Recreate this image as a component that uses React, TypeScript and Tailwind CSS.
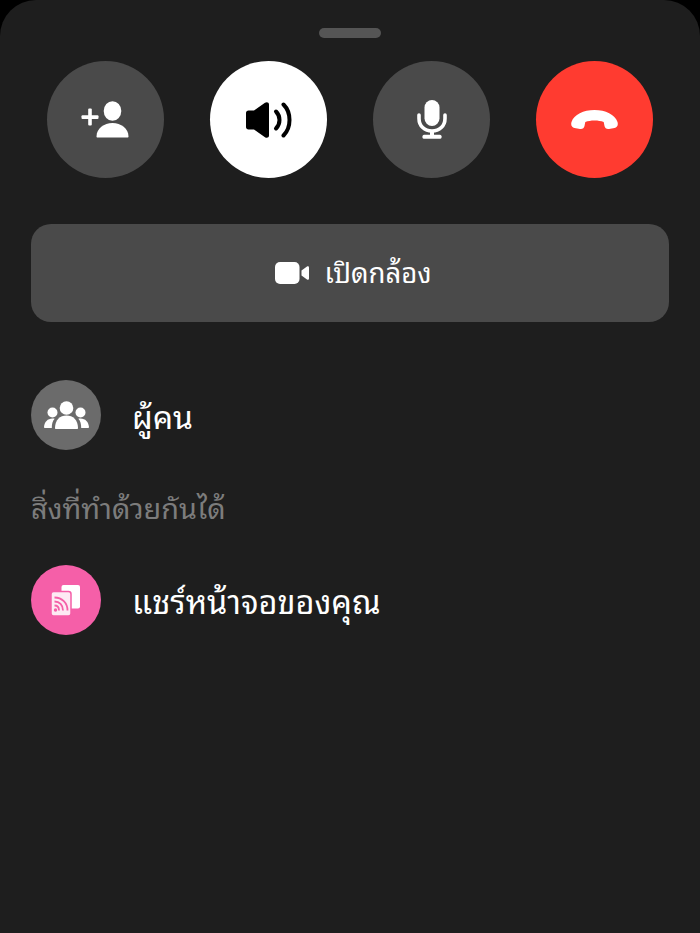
const font = { fontFamily: '"Noto Sans Thai Looped", "Noto Sans Thai", "Noto Sans", "Liberation Sans", sans-serif' };

function Circle({ bg, children }: { bg: string; children: React.ReactNode }) {
  return <div className={`flex h-[117px] w-[117px] items-center justify-center rounded-full ${bg}`}>{children}</div>;
}

export default function App() {
  return (
    <div className="h-[933px] w-[700px] bg-black" style={font}>
      <div className="flex h-full flex-col rounded-t-[36px] bg-[#1e1e1e] px-[31px] pt-[28px]">
        <div className="mx-auto h-[10px] w-[62px] rounded-full bg-[#555555]" />
        <div className="mt-[23px] flex justify-between px-[16px]">
          <Circle bg="bg-[#4a4a4a]">
            <svg width="50" height="38" viewBox="0 0 50 38" fill="white">
              <rect x="0.500" y="14.300" width="17" height="3.600" rx="1" />
              <rect x="7.200" y="7.600" width="3.600" height="17" rx="1" />
              <ellipse cx="31.500" cy="10" rx="8.800" ry="9.800" />
              <path d="M15.500 35.500C15.500 27.500 23 22 31.500 22s16 5.500 16 13.500c0 .6-.4 1-1 1h-30c-.6 0-1-.4-1-1z" />
            </svg>
          </Circle>
          <Circle bg="bg-white">
            <svg width="46" height="36" viewBox="0 0 46 36" fill="black">
              <path d="M0 11c0-1.500 1-2.500 2.500-2.500H8L19 .8C20.800-.4 23 .4 23 2.500v31c0 2.100-2.200 2.900-4 1.700L8 27.500H2.500C1 27.500 0 26.500 0 25z" />
              <path d="M30 9.500c2.300 2.300 3.500 5.200 3.500 8.500s-1.200 6.200-3.500 8.500" fill="none" stroke="black" strokeWidth="4" strokeLinecap="round" />
              <path d="M37.500 2.500C41.500 6.500 43.500 12 43.500 18s-2 11.500-6 15.500" fill="none" stroke="black" strokeWidth="4" strokeLinecap="round" />
            </svg>
          </Circle>
          <Circle bg="bg-[#4a4a4a]">
            <svg width="30" height="39" viewBox="0 0 30 39" fill="white">
              <rect x="7.500" y="0" width="15" height="26" rx="7.500" />
              <path d="M2 15v3.500C2 26 7.500 31 15 31s13-5 13-12.500V15" fill="none" stroke="white" strokeWidth="3.600" strokeLinecap="round" />
              <rect x="13" y="30" width="4" height="6" />
              <rect x="5.500" y="34.800" width="19" height="4" rx="1.500" />
            </svg>
          </Circle>
          <Circle bg="bg-[#ff3b30]">
            <svg width="47" height="19" viewBox="0 0 47 19" fill="white">
              <path d="M.5 12C3 4.500 12.500 0 23.500 0s20.500 4.500 23 12c.9 3-.3 5.300-3 5.900l-5.500 1c-2.400.4-4-.8-4.500-3l-.8-3.900C30 11 27 10.500 23.500 10.500S17 11 14.300 12l-.8 3.900c-.5 2.200-2.100 3.400-4.500 3l-5.500-1C.8 17.300-.4 15 .5 12z" />
            </svg>
          </Circle>
        </div>
        <div className="mt-[46px] flex h-[98px] items-center justify-center gap-[15px] rounded-[20px] bg-[#4a4a4a] pl-[7px]">
          <svg width="34" height="22" viewBox="0 0 34 22" fill="white">
            <rect x="0" y="0" width="24.500" height="22" rx="5" />
            <path d="M26.500 8.500L32 4.500c.8-.5 2-.2 2 1v11c0 1.200-1.200 1.500-2 1l-5.500-4z" />
          </svg>
          <span className="pb-[3px] text-[27.500px] leading-none text-white">เปิดกล้อง</span>
        </div>
        <div className="mt-[58px] flex items-center gap-[31px]">
          <div className="flex h-[70px] w-[70px] items-center justify-center rounded-full bg-[#6b6b6b]">
            <svg width="45" height="28" viewBox="0 0 45 28" fill="white">
              <circle cx="22.500" cy="7" r="6.800" />
              <path d="M11 27c0-8 5-12.500 11.500-12.500S34 19 34 27c0 .6-.4 1-1 1H12c-.6 0-1-.4-1-1z" />
              <circle cx="8.500" cy="11.500" r="5" />
              <path d="M1 27c-.6 0-1-.5-1-1 .5-5 3.500-8.500 8.500-8.500 .8 0 1.500.1 2.200.3C8.500 20 7.800 23 7.800 27z" />
              <circle cx="36.500" cy="11.500" r="5" />
              <path d="M44 27c.6 0 1-.5 1-1-.5-5-3.500-8.500-8.500-8.500-.8 0-1.500.1-2.200.3 2.200 2.200 2.900 5.200 2.900 9.200z" />
            </svg>
          </div>
          <span className="text-[32px] leading-none text-white">ผู้คน</span>
        </div>
        <div className="mt-[41px] text-[28.800px] leading-[30px] text-[#7c7c7c]">สิ่งที่ทำด้วยกันได้</div>
        <div className="mt-[44px] flex items-center gap-[31px]">
          <div className="flex h-[70px] w-[70px] items-center justify-center rounded-full bg-[#f55fa8]">
            <svg width="30" height="32" viewBox="0 0 30 32">
              <rect x="10.500" y="1" width="18.500" height="23.500" rx="2" fill="white" />
              <rect x="0" y="7.500" width="20" height="24.500" rx="2.500" fill="#fdeaf3" stroke="#f55fa8" strokeWidth="1.500" />
              <path d="M3.500 17.500c5 0 8.500 3.500 8.500 9" fill="none" stroke="#f55fa8" strokeWidth="1.800" />
              <path d="M3.500 13.500c7.500 0 13 5.500 13 13" fill="none" stroke="#f55fa8" strokeWidth="1.800" />
              <path d="M3.500 21.500c3 0 4.500 2 4.500 5" fill="none" stroke="#f55fa8" strokeWidth="1.800" />
              <circle cx="4.500" cy="26" r="1.700" fill="#f55fa8" />
            </svg>
          </div>
          <span className="pb-[2px] text-[32.500px] leading-none text-white">แชร์หน้าจอของคุณ</span>
        </div>
      </div>
    </div>
  );
}
